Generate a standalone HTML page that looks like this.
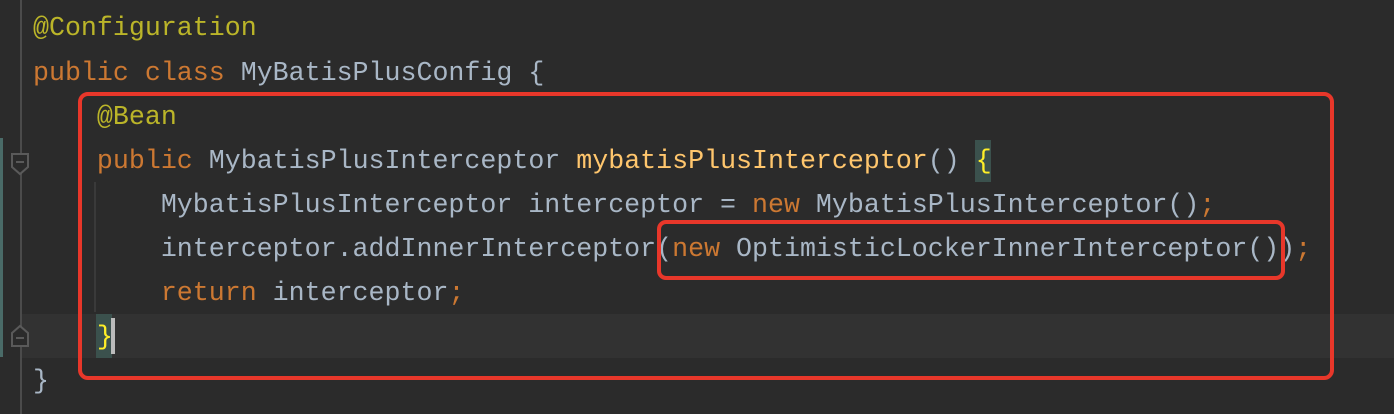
<!DOCTYPE html>
<html><head><style>
body{margin:0;width:1394px;height:414px;background:#2b2b2b;overflow:hidden;position:relative;font-family:"Liberation Mono",monospace;}
.l{position:absolute;left:33px;font-size:26.63px;line-height:44px;white-space:pre;color:#a9b7c6;}
.k{color:#cc7832}.a{color:#bbb529}.f{color:#ffc66d}.y{color:#ffef28}
</style></head><body>
<div style="position:absolute;left:0;top:0;width:20px;height:414px;background:#2b2b2b"></div>
<div style="position:absolute;left:20px;top:0;width:2px;height:414px;background:#4b4b4b"></div>
<div style="position:absolute;left:0;top:138px;width:3px;height:219px;background:#4a6b68"></div>
<div style="position:absolute;left:22px;top:314px;width:1372px;height:44px;background:#323232"></div>
<div style="position:absolute;left:94px;top:182px;width:2px;height:130px;background:#3a3a3a"></div>
<svg style="position:absolute;left:10px;top:152px" width="20" height="26"><path d="M2 2H18V15L10 22L2 15Z" fill="#2b2b2b" stroke="#5a5a5a" stroke-width="2"/><path d="M6 10H14" stroke="#5a5a5a" stroke-width="2"/></svg>
<svg style="position:absolute;left:10px;top:322px" width="20" height="26"><path d="M2 24H18V11L10 4L2 11Z" fill="#2b2b2b" stroke="#5a5a5a" stroke-width="2"/><path d="M6 16H14" stroke="#5a5a5a" stroke-width="2"/></svg>
<div style="position:absolute;left:975px;top:140px;width:16px;height:42px;background:#3b514d"></div>
<div style="position:absolute;left:96px;top:314px;width:16px;height:44px;background:#3b514d"></div>
<div style="position:absolute;left:111px;top:318px;width:4px;height:36px;background:#bbbbbb"></div>
<div class="l" style="top:6px"><span class="a">@Configuration</span></div>
<div class="l" style="top:51px"><span class="k">public class </span>MyBatisPlusConfig {</div>
<div class="l" style="top:95px">    <span class="a">@Bean</span></div>
<div class="l" style="top:139px">    <span class="k">public </span>MybatisPlusInterceptor <span class="f">mybatisPlusInterceptor</span>() <span class="y">{</span></div>
<div class="l" style="top:183px">        MybatisPlusInterceptor interceptor = <span class="k">new </span>MybatisPlusInterceptor()<span class="k">;</span></div>
<div class="l" style="top:227px">        interceptor.addInnerInterceptor(<span class="k">new </span>OptimisticLockerInnerInterceptor())<span class="k">;</span></div>
<div class="l" style="top:271px">        <span class="k">return </span>interceptor<span class="k">;</span></div>
<div class="l" style="top:315px">    <span class="y">}</span></div>
<div class="l" style="top:359px">}</div>
<div style="position:absolute;left:78px;top:92px;width:1248px;height:280px;border:4px solid #e8372a;border-radius:10px"></div>
<div style="position:absolute;left:657px;top:220px;width:620px;height:52px;border:4px solid #e8372a;border-radius:9px"></div>
</body></html>
